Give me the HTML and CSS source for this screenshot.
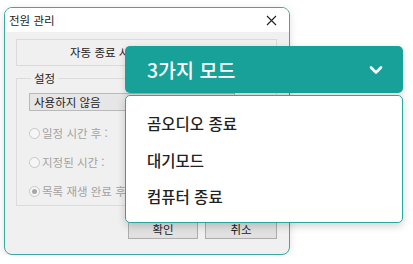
FILE: index.html
```html
<!DOCTYPE html>
<html lang="ko">
<head>
    <meta charset="UTF-8">
    <meta name="viewport" content="width=device-width, initial-scale=1.0">
    <title>전원 관리</title>
    <link rel="stylesheet" href="styles.css">
</head>
<body>
    <div class="dialog">
        <div class="titlebar">
            <span class="title">전원 관리</span>
            <span class="close">
                <svg width="11" height="11" viewBox="0 0 11 11">
                    <path d="M1 1 L10 10 M10 1 L1 10" stroke="#222" stroke-width="1.1" fill="none"/>
                </svg>
            </span>
        </div>
        <div class="content">
            <div class="info">자동 종료 시간 설정 안내</div>
            <fieldset class="group">
                <legend>설정</legend>
                <div class="combo">사용하지 않음</div>
                <label class="radio"><span class="dot"></span>일정 시간 후 :</label>
                <label class="radio"><span class="dot"></span>지정된 시간 :</label>
                <label class="radio"><span class="dot checked"></span>목록 재생 완료 후</label>
            </fieldset>
            <div class="buttons">
                <button type="button">확인</button>
                <button type="button">취소</button>
            </div>
        </div>
    </div>

    <div class="dropdown">
        <div class="dropdown-head">
            <span>3가지 모드</span>
            <svg width="14" height="10" viewBox="0 0 14 10">
                <path d="M2 2.5 L7 7.5 L12 2.5" stroke="#fff" stroke-width="2.6" fill="none" stroke-linecap="round" stroke-linejoin="round"/>
            </svg>
        </div>
        <ul class="dropdown-menu">
            <li>곰오디오 종료</li>
            <li>대기모드</li>
            <li>컴퓨터 종료</li>
        </ul>
    </div>
</body>
</html>
```

FILE: styles.css
```css
body {
    margin: 0;
    padding: 7px 0 0 4px;
    background: #ffffff;
    font-family: "Noto Sans CJK KR", "Noto Sans", sans-serif;
    color: #222;
}
.dialog {
    width: 284px;
    height: 246px;
    border: 1px solid #3aa9a0;
    border-radius: 8px;
    background: #f0f0f0;
    overflow: hidden;
    box-shadow: 0 2px 8px rgba(0, 0, 0, 0.12);
}
.titlebar {
    height: 24px;
    background: #ffffff;
    display: flex;
    align-items: center;
    justify-content: space-between;
    padding: 0 12px 0 4px;
}
.title {
    font-size: 11.5px;
}
.close {
    display: flex;
}
.content {
    padding: 7px 12px 0 11px;
}
.info {
    height: 25px;
    border: 1px solid #dadada;
    line-height: 25px;
    font-size: 11.5px;
    padding-left: 53px;
}
.group {
    margin: 6px 0 0 0;
    padding: 9px 0 0 12px;
    height: 123px;
    border: 1px solid #dcdcdc;
    font-size: 11.5px;
}
.group legend {
    padding: 0 3px;
    margin-left: 2px;
    line-height: 12px;
}
.combo {
    width: 200px;
    height: 16px;
    line-height: 16px;
    border: 1px solid #b9b9b9;
    background: #e6e6e6;
    padding-left: 4px;
    margin-bottom: 14px;
}
.radio {
    display: flex;
    align-items: center;
    gap: 2px;
    height: 16px;
    margin-bottom: 13px;
    color: #a2a2a2;
}
.dot {
    width: 9px;
    height: 9px;
    border: 1px solid #c8c8c8;
    border-radius: 50%;
    background: #f6f6f6;
    position: relative;
}
.dot.checked::after {
    content: "";
    position: absolute;
    left: 2px;
    top: 2px;
    width: 5px;
    height: 5px;
    border-radius: 50%;
    background: #a8a8a8;
}
.buttons {
    display: flex;
    justify-content: flex-end;
    gap: 7px;
    margin-top: 12px;
}
.buttons button {
    width: 70px;
    height: 21px;
    padding: 0;
    border: 1px solid #adadad;
    background: #e1e1e1;
    font-family: inherit;
    font-size: 11.5px;
    color: #222;
}
.buttons button:last-child {
    width: 72px;
}
.dropdown {
    position: absolute;
    left: 125px;
    top: 46px;
    width: 278px;
}
.dropdown-head {
    height: 47px;
    background: #17a198;
    border-radius: 5px;
    display: flex;
    align-items: center;
    justify-content: space-between;
    padding: 0 20px 0 22px;
    color: #ffffff;
    font-size: 19.5px;
    font-weight: 500;
    box-shadow: 0 2px 6px rgba(0, 0, 0, 0.15);
}
.dropdown-menu {
    list-style: none;
    margin: 2px 0 0 0;
    padding: 9px 0 0 0;
    height: 117px;
    background: #ffffff;
    border: 1px solid #2aa79e;
    border-radius: 5px;
    box-shadow: 0 3px 8px rgba(0, 0, 0, 0.18);
}
.dropdown-menu li {
    height: 36.5px;
    line-height: 36px;
    padding-left: 21px;
    font-size: 15.5px;
    font-weight: 500;
    color: #222;
}
```
